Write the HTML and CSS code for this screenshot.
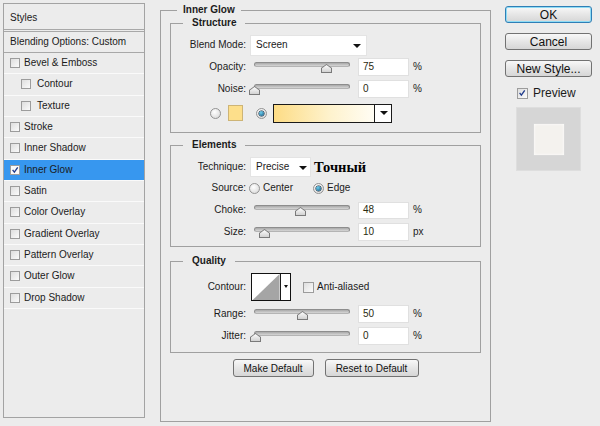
FILE: index.html
```html
<!DOCTYPE html>
<html lang="en">
<head>
    <meta charset="UTF-8">
    <title>Layer Style - Inner Glow</title>
    <link rel="stylesheet" href="styles.css">
</head>
<body>
<div class="dialog">
    <div class="styles-list">
        <div class="head">Styles</div>
        <div class="head blend">Blending Options: Custom</div>
        <div class="item"><span class="cb"></span>Bevel &amp; Emboss</div>
        <div class="item sub"><span class="cb"></span>Contour</div>
        <div class="item sub"><span class="cb"></span>Texture</div>
        <div class="item"><span class="cb"></span>Stroke</div>
        <div class="item"><span class="cb"></span>Inner Shadow</div>
        <div class="item active">
            <span class="cb"><svg viewBox="0 0 10 10"><path d="M2 4.8 L4.2 7.6 L8.4 1.6" /></svg></span>Inner Glow
        </div>
        <div class="item"><span class="cb"></span>Satin</div>
        <div class="item"><span class="cb"></span>Color Overlay</div>
        <div class="item"><span class="cb"></span>Gradient Overlay</div>
        <div class="item"><span class="cb"></span>Pattern Overlay</div>
        <div class="item"><span class="cb"></span>Outer Glow</div>
        <div class="item"><span class="cb"></span>Drop Shadow</div>
    </div>

    <fieldset class="group outer">
        <legend>Inner Glow</legend>

        <fieldset class="group structure">
            <legend>Structure</legend>
            <div class="row">
                <span class="lbl">Blend Mode:</span>
                <div class="select blend-mode">Screen<span class="arrow"></span></div>
            </div>
            <div class="row">
                <span class="lbl">Opacity:</span>
                <div class="slider"><i class="track"></i><i class="thumb" style="left:67px"></i></div>
                <div class="num">75</div><span class="unit">%</span>
            </div>
            <div class="row">
                <span class="lbl">Noise:</span>
                <div class="slider"><i class="track"></i><i class="thumb" style="left:-5px"></i></div>
                <div class="num">0</div><span class="unit">%</span>
            </div>
            <div class="row colors">
                <span class="radio"></span>
                <span class="swatch"></span>
                <span class="radio on"></span>
                <div class="gradient"><span class="ramp"></span><span class="drop"><span class="arrow"></span></span></div>
            </div>
        </fieldset>

        <fieldset class="group elements">
            <legend>Elements</legend>
            <div class="row technique-row">
                <span class="lbl">Technique:</span>
                <div class="select technique">Precise<span class="arrow"></span></div>
                <span class="ru">Точный</span>
            </div>
            <div class="row">
                <span class="lbl">Source:</span>
                <span class="radio src"></span><span class="opt">Center</span>
                <span class="radio on src edge"></span><span class="opt">Edge</span>
            </div>
            <div class="row choke">
                <span class="lbl">Choke:</span>
                <div class="slider"><i class="track"></i><i class="thumb" style="left:41px"></i></div>
                <div class="num">48</div><span class="unit">%</span>
            </div>
            <div class="row">
                <span class="lbl">Size:</span>
                <div class="slider"><i class="track"></i><i class="thumb" style="left:5px"></i></div>
                <div class="num">10</div><span class="unit">px</span>
            </div>
        </fieldset>

        <fieldset class="group quality">
            <legend>Quality</legend>
            <div class="row contour-row">
                <span class="lbl">Contour:</span>
                <div class="contour">
                    <svg class="curve" viewBox="0 0 29 28"><polygon points="0,28 29,0 29,28" /></svg>
                    <span class="drop"><span class="arrow small"></span></span>
                </div>
                <span class="cb aa"></span><span class="opt">Anti-aliased</span>
            </div>
            <div class="row range">
                <span class="lbl">Range:</span>
                <div class="slider"><i class="track"></i><i class="thumb" style="left:43px"></i></div>
                <div class="num">50</div><span class="unit">%</span>
            </div>
            <div class="row">
                <span class="lbl">Jitter:</span>
                <div class="slider"><i class="track"></i><i class="thumb" style="left:-4px"></i></div>
                <div class="num">0</div><span class="unit">%</span>
            </div>
        </fieldset>

        <div class="defaults">
            <button class="btn make">Make Default</button>
            <button class="btn reset">Reset to Default</button>
        </div>
    </fieldset>

    <div class="side">
        <button class="btn big ok">OK</button>
        <button class="btn big">Cancel</button>
        <button class="btn big">New Style...</button>
        <div class="preview-check">
            <span class="cb"><svg viewBox="0 0 10 10"><path d="M2 4.8 L4.2 7.6 L8.4 1.6" /></svg></span>Preview
        </div>
        <div class="preview"><div class="sample"></div></div>
    </div>
</div>
</body>
</html>
```

FILE: styles.css
```css
/* reset */
* {
    box-sizing: border-box;
}
body {
    margin: 0;
    background: #ececec;
    color: #1b1b1b;
    font: 10px/12px "Liberation Sans", Arial, sans-serif;
}
.dialog {
    display: flex;
    align-items: flex-start;
    width: 600px;
    height: 426px;
    overflow: hidden;
}

/* left styles list */
.styles-list {
    width: 142px;
    height: 415px;
    margin: 3px 0 0 3px;
    border: 1px solid #a3a3a3;
}
.head {
    height: 28px;
    padding: 2px 0 0 6px;
    display: flex;
    align-items: center;
    border-bottom: 3px double #a8a8a8;
}
.head.blend {
    height: 21px;
    padding-top: 0;
    border-bottom: 1px solid #a8a8a8;
}
.item {
    height: 21.33px;
    display: flex;
    align-items: center;
    gap: 4px;
    padding-left: 6px;
    border-bottom: 1px solid #fafafa;
}
.item.sub {
    padding-left: 17px;
    gap: 6px;
}
.item.active {
    background: #3797ef;
}
.cb {
    display: inline-block;
    width: 10px;
    height: 10px;
    border: 1px solid #9c9c9c;
    background: linear-gradient(135deg, #dedede, #fbfbfb);
    flex: none;
}
.cb svg {
    display: block;
    width: 8px;
    height: 8px;
    fill: none;
    stroke: #1f3b8c;
    stroke-width: 1.7;
}
.item.active .cb {
    background: #fafafa;
}

/* group boxes */
fieldset.group {
    margin: 0;
    padding: 0;
    min-width: 0;
    border: 1px solid #a0a0a0;
}
fieldset.group legend {
    margin-left: 12px;
    padding: 0 9px;
    height: 12px;
    line-height: 12px;
    font-weight: bold;
}
fieldset.outer {
    width: 331px;
    margin: 4px 0 0 15px;
    padding: 0 9px 44px 9px;
}
fieldset.outer > legend {
    margin-left: 7px;
    padding: 0 6px;
}
.structure {
    margin-top: 1px !important;
    padding: 5px 0 9px 0 !important;
}
.elements {
    margin-top: 6px !important;
    padding: 6px 0 3px 0 !important;
}
.quality {
    margin-top: 8px !important;
    padding: 6px 0 5px 0 !important;
}

.row {
    display: flex;
    align-items: center;
    height: 22px;
}
.technique-row {
    height: 20px;
}
.lbl {
    width: 75px;
    text-align: right;
    flex: none;
}
.select {
    position: relative;
    height: 21px;
    margin-left: 4px;
    padding-left: 5px;
    display: flex;
    align-items: center;
    background: #fff;
    border: 1px solid #e4e4e4;
}
.blend-mode {
    width: 117px;
}
.technique {
    width: 61px;
    height: 20px;
}
.technique .arrow {
    right: 3px;
}
.arrow {
    position: absolute;
    right: 5px;
    top: 8px;
    width: 0;
    height: 0;
    border-top: 4px solid #111;
    border-left: 4px solid transparent;
    border-right: 4px solid transparent;
}
.ru {
    margin-left: 3px;
    font: bold 14.5px "Liberation Serif", "Times New Roman", serif;
    color: #000;
}

/* slider */
.slider {
    position: relative;
    width: 96px;
    height: 11px;
    margin: 1px 0 0 8px;
    flex: none;
}
.track {
    position: absolute;
    left: 0;
    top: 0;
    width: 96px;
    height: 5px;
    border-radius: 3px;
    border: 1px solid #8d8d8d;
    border-bottom-color: #b4b4b4;
    background: linear-gradient(#a9a9a9, #d6d6d6);
}
.thumb {
    position: absolute;
    top: 2px;
    width: 11px;
    height: 9px;
    background: #7a7a7a;
    clip-path: polygon(0 100%, 0 45%, 50% 0, 100% 45%, 100% 100%);
}
.thumb::after {
    content: '';
    position: absolute;
    left: 1px;
    top: 1px;
    right: 1px;
    bottom: 1px;
    background: linear-gradient(#fdfdfd, #d2d2d2);
    clip-path: polygon(0 100%, 0 45%, 50% 0, 100% 45%, 100% 100%);
}
.num {
    width: 51px;
    height: 18px;
    margin-left: 8px;
    padding-left: 4px;
    display: flex;
    align-items: center;
    background: #fff;
    border: 1px solid #e0e0e0;
    color: #2a2a10;
}
.choke .num {
    height: 17px;
}
.unit {
    margin-left: 4px;
}

/* radios and colors */
.radio {
    position: relative;
    width: 11px;
    height: 11px;
    border-radius: 50%;
    border: 1px solid #939393;
    background: radial-gradient(circle at 40% 35%, #ffffff, #d4d4d4);
    flex: none;
}
.radio.on::after {
    content: '';
    position: absolute;
    left: 2px;
    top: 2px;
    width: 5px;
    height: 5px;
    border-radius: 50%;
    background: radial-gradient(circle at 40% 35%, #6fd0ee, #0c4c78);
    box-shadow: 0 0 0 0.5px #123;
}
.colors {
    height: 20px;
    margin-top: 3px;
    padding-left: 39px;
}
.swatch {
    width: 15px;
    height: 16px;
    margin-left: 7px;
    background: #fddf8b;
    border: 1px solid #cdb476;
}
.colors .radio.on {
    margin-left: 13px;
}
.gradient {
    display: flex;
    width: 119px;
    height: 19px;
    margin-left: 6px;
    border: 1px solid #1a1a1a;
}
.ramp {
    flex: 1;
    background: linear-gradient(90deg, #fddc85, #fef2cc 55%, #fffdf4);
}
.drop {
    position: relative;
    width: 17px;
    border-left: 1px solid #1a1a1a;
    background: #fff;
}
.drop .arrow {
    right: 3px;
    top: 6px;
}
.radio.src {
    margin-left: 3px;
}
.opt {
    margin-left: 3px;
}
.radio.edge {
    margin-left: 20px;
}

/* contour */
.contour-row {
    height: 28px;
}
.contour {
    display: flex;
    width: 40px;
    height: 28px;
    margin-left: 5px;
    border: 1px solid #111;
    background: #fff;
}
.curve {
    width: 29px;
    height: 26px;
    fill: #a5a5a5;
}
.contour .drop {
    width: 10px;
}
.arrow.small {
    right: 2px;
    top: 11px;
    border-top-width: 3px;
    border-left-width: 2.5px;
    border-right-width: 2.5px;
}
.cb.aa {
    width: 11px;
    height: 11px;
    margin-left: 12px;
}
.range {
    margin-top: 2px;
}

/* buttons */
.btn {
    height: 18px;
    padding: 0;
    border: 1px solid #727272;
    border-radius: 3px;
    background: linear-gradient(#f8f8f8, #e6e6e6 50%, #d6d6d6);
    color: #111;
    font: 10px "Liberation Sans", Arial, sans-serif;
}
.defaults {
    display: flex;
    justify-content: center;
    gap: 11px;
    margin-top: 6px;
}
.make {
    width: 81px;
}
.reset {
    width: 94px;
}
.side {
    display: flex;
    flex-direction: column;
    width: 87px;
    margin: 6px 0 0 14px;
}
.btn.big {
    height: 17px;
    margin-bottom: 10px;
    font-size: 12px;
    line-height: 14px;
}
.btn.ok {
    border-color: #2f7fb6;
    box-shadow: inset 0 0 0 1px #8fdcf5;
}
.preview-check {
    display: flex;
    align-items: center;
    gap: 5px;
    height: 12px;
    margin: 0 0 0 12px;
    font-size: 12px;
}
.preview-check .cb {
    width: 11px;
    height: 11px;
}
.preview {
    display: flex;
    align-items: center;
    justify-content: center;
    width: 65px;
    height: 64px;
    margin: 8px 0 0 11px;
    background: #d6d6d6;
    border: 1px solid #dedede;
}
.sample {
    width: 30px;
    height: 31px;
    background: #f4f2ee;
    box-shadow: inset 0 0 3px #fff, 0 0 1px #e8e8e8;
}
```
